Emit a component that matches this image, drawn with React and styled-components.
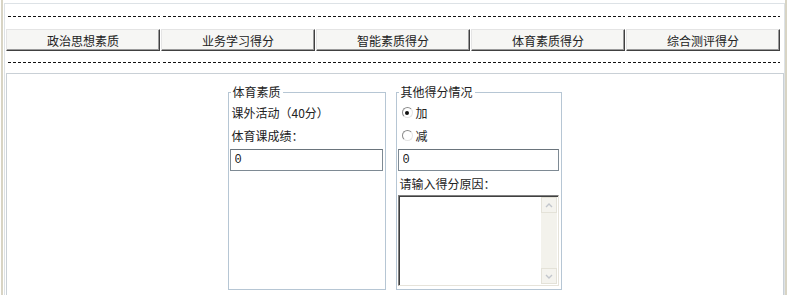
import React from "react";
import styled, { createGlobalStyle } from "styled-components";

const GlobalStyle = createGlobalStyle`
  html, body {
    margin: 0;
    padding: 0;
    background: #fff;
    overflow: hidden;
  }
  body {
    font-family: "Noto Sans CJK SC", "Noto Sans", sans-serif;
    font-size: 12px;
    color: #222;
  }
`;

const Window = styled.div`
  height: 295px;
  overflow: hidden;
  border-left: 2px solid #d8d4c4;
  border-right: 2px solid #d8d4c4;
  margin: 0 1px;
  box-sizing: border-box;
`;

const Frame = styled.div`
  margin: 3px 0 0 1px;
  width: 781px;
  height: 292px;
  overflow: hidden;
  border-top: 1px solid #dde2e6;
  border-left: 1px solid #dde2e6;
  border-right: 1px solid #dde2e6;
  box-sizing: border-box;
`;

const Row = styled.div`
  display: grid;
  grid-template-columns: repeat(5, 155px);
  padding-left: 1px;
  height: ${(p) => p.h}px;
  margin-top: ${(p) => p.mt || 0}px;
  align-items: end;
`;

const Dash = styled.div`
  height: 1px;
  margin: 0 1px 0 2px;
  background-image: repeating-linear-gradient(
    to right,
    #111 0 3px,
    transparent 3px 5px
  );
`;

const TabButton = styled.button`
  width: 154px;
  height: 22px;
  padding: 0;
  margin: 0;
  font-family: "Noto Sans CJK SC", sans-serif;
  font-size: 12px;
  color: #222;
  background: #f6f6f4;
  border: 1px solid;
  border-color: #e4e4e4 #404040 #404040 #e4e4e4;
  box-shadow: inset -1px -1px 0 #9a9a9a;
  cursor: pointer;
`;

const Panel = styled.div`
  margin: 10px 0 0 1px;
  width: 778px;
  height: 240px;
  border: 1px solid #c9d0d6;
  box-sizing: border-box;
  background: #fff;
  display: flex;
  justify-content: center;
  align-items: flex-start;
  padding-top: 11px;
`;

const Fields = styled.div`
  display: flex;
  gap: 10px;
  align-items: stretch;
  margin-right: 1px;
`;

const Group = styled.fieldset`
  margin: 0;
  width: ${(p) => p.w}px;
  box-sizing: border-box;
  padding: 0 2px 3px 1px;
  border: 1px solid #b6c6d4;
  display: flex;
  flex-direction: column;
`;

const Legend = styled.legend`
  padding: 0 2px;
  margin-left: 1px;
  font-size: 12px;
  line-height: 14px;
  color: #222;
`;

const Line = styled.div`
  height: 23px;
  line-height: 23px;
  padding-left: 2px;
  margin-top: ${(p) => p.mt || 0}px;
  display: flex;
  align-items: center;
  gap: 3px;
  white-space: nowrap;
`;

const TextInput = styled.input`
  display: block;
  width: 100%;
  height: 22px;
  margin: 2px 0 0;
  box-sizing: border-box;
  border: 1px solid #7e8a94;
  border-top-color: #6a747c;
  padding: 0 4px;
  font-family: "Liberation Mono", monospace;
  font-size: 12px;
  color: #222;
  background: #fff;
  outline: none;
`;

const Radio = styled.span`
  width: 11px;
  height: 11px;
  margin-left: 2px;
  border-radius: 50%;
  box-sizing: border-box;
  border: 1px solid;
  border-color: #8a8a8a #e4e4e4 #e4e4e4 #8a8a8a;
  background: #fff;
  display: inline-flex;
  align-items: center;
  justify-content: center;

  &::after {
    content: "";
    width: 4px;
    height: 4px;
    border-radius: 50%;
    background: ${(p) => (p.checked ? "#111" : "transparent")};
  }
`;

const AreaBox = styled.div`
  display: flex;
  height: 91px;
  box-sizing: border-box;
  border: 1px solid;
  border-color: #808080 #e6e3da #e6e3da #808080;
  box-shadow: inset 1px 1px 0 #404040;
  background: #fff;
`;

const Area = styled.textarea`
  flex: 1;
  border: none;
  resize: none;
  outline: none;
  margin: 1px 0 0 1px;
  padding: 2px;
  font-family: "Noto Sans CJK SC", sans-serif;
  font-size: 12px;
  overflow: hidden;
`;

const ScrollBar = styled.div`
  width: 16px;
  margin: 1px 1px 1px 0;
  background: #f3f2ec;
  display: flex;
  flex-direction: column;
  justify-content: space-between;
`;

const ScrollBtn = styled.div`
  height: 16px;
  box-sizing: border-box;
  border: 1px solid #e4e2d8;
  background: #f4f3ee;
  display: flex;
  align-items: center;
  justify-content: center;
`;

const Chevron = ({ down }) => (
  <svg width="8" height="5" viewBox="0 0 8 5">
    <path
      d={down ? "M1 1 L4 4 L7 1" : "M1 4 L4 1 L7 4"}
      fill="none"
      stroke="#c2c6cc"
      strokeWidth="1.4"
    />
  </svg>
);

const tabs = ["政治思想素质", "业务学习得分", "智能素质得分", "体育素质得分", "综合测评得分"];

export default function App() {
  return (
    <>
      <GlobalStyle />
      <Window>
        <Frame>
          <Row h={13}>
            {tabs.map((t) => (
              <Dash key={t} />
            ))}
          </Row>
          <Row h={22} mt={12}>
            {tabs.map((t) => (
              <TabButton key={t}>{t}</TabButton>
            ))}
          </Row>
          <Row h={12} mt={0}>
            {tabs.map((t) => (
              <Dash key={t} />
            ))}
          </Row>
          <Panel>
            <Fields>
              <Group w={158}>
                <Legend>体育素质</Legend>
                <Line mt={2}>课外活动（40分）</Line>
                <Line>体育课成绩：</Line>
                <TextInput defaultValue="0" />
              </Group>
              <Group w={166}>
                <Legend>其他得分情况</Legend>
                <Line mt={2}>
                  <Radio checked />
                  加
                </Line>
                <Line>
                  <Radio />
                  减
                </Line>
                <TextInput defaultValue="0" />
                <Line mt={1}>请输入得分原因：</Line>
                <AreaBox>
                  <Area />
                  <ScrollBar>
                    <ScrollBtn>
                      <Chevron />
                    </ScrollBtn>
                    <ScrollBtn>
                      <Chevron down />
                    </ScrollBtn>
                  </ScrollBar>
                </AreaBox>
              </Group>
            </Fields>
          </Panel>
        </Frame>
      </Window>
    </>
  );
}
